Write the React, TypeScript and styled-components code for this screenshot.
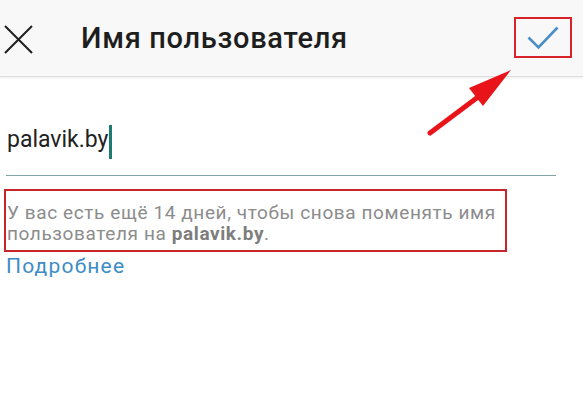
import React from "react";
import styled, { createGlobalStyle } from "styled-components";

const Global = createGlobalStyle`
  html, body { margin: 0; padding: 0; background: #ffffff; }
  body { font-family: Roboto, "Noto Sans", Arial, sans-serif; width: 583px; height: 400px; overflow: hidden; }
`;

const Page = styled.div`
  position: relative;
  width: 583px;
  height: 400px;
  background: #ffffff;
`;

const Header = styled.header`
  height: 77px;
  box-sizing: border-box;
  display: flex;
  align-items: center;
  padding: 0 11px 0 4px;
  background: #f8f8f8;
  border-bottom: 1px solid #dedede;
  box-shadow: 0 1px 2px rgba(0, 0, 0, 0.08);
`;

const IconButton = styled.button`
  width: 29px;
  height: 29px;
  padding: 0;
  margin: 2px 0 0 0;
  border: none;
  background: none;
  display: flex;
  align-items: center;
  justify-content: center;
`;

const Title = styled.h1`
  margin: 0 0 0 48px;
  flex: 1;
  font-size: 29px;
  font-weight: 500;
  color: #1e1e1e;
  letter-spacing: 0.7px;
`;

const ConfirmButton = styled.button`
  width: 58px;
  height: 41px;
  box-sizing: border-box;
  margin-top: -1px;
  padding: 0;
  border: 2px solid #d9232b;
  background: none;
  display: flex;
  align-items: center;
  justify-content: center;
`;

const Content = styled.main`
  padding: 0 27px 0 4px;
`;

const Field = styled.div`
  height: 99px;
  box-sizing: border-box;
  display: flex;
  align-items: flex-start;
  padding: 46px 0 0 1px;
  border-bottom: 1.5px solid #7fa3a6;
  margin-left: 2px;
`;

const Value = styled.span`
  font-size: 23px;
  line-height: 34px;
  color: #222222;
`;

const Caret = styled.span`
  display: block;
  width: 3px;
  height: 34px;
  margin: 2px 0 0 0;
  background: #1f7a72;
`;

const HintBox = styled.div`
  margin-top: 13px;
  width: 503px;
  box-sizing: border-box;
  border: 2px solid #c8252b;
  padding: 11px 0 6px 1px;
  font-size: 19px;
  line-height: 21px;
  letter-spacing: 0.6px;
  color: #8c8c8c;
`;

const Strong = styled.b`
  font-weight: 700;
  color: #7d7d7d;
`;

const MoreLink = styled.a`
  display: block;
  margin: 2px 0 0 2px;
  font-size: 21px;
  letter-spacing: 1.2px;
  color: #3e8cc6;
  text-decoration: none;
`;

const Arrow = styled.svg`
  position: absolute;
  left: 420px;
  top: 60px;
`;

export default function App() {
  return (
    <Page>
      <Global />
      <Header>
        <IconButton aria-label="close">
          <svg width="29" height="29" viewBox="0 0 29 29">
            <path d="M1 1 L28 28 M28 1 L1 28" stroke="#1f1f1f" strokeWidth="2" fill="none" />
          </svg>
        </IconButton>
        <Title>Имя пользователя</Title>
        <ConfirmButton aria-label="done">
          <svg width="32" height="25" viewBox="0 0 32 25">
            <path d="M1.5 12.5 L11.5 22.5 L30.5 2.5" stroke="#4a8ec6" strokeWidth="2.6" fill="none" />
          </svg>
        </ConfirmButton>
      </Header>
      <Content>
        <Field>
          <Value>palavik.by</Value>
          <Caret />
        </Field>
        <HintBox>
          У вас есть ещё 14 дней, чтобы снова поменять имя пользователя на <Strong>palavik.by</Strong>.
        </HintBox>
        <MoreLink href="#">Подробнее</MoreLink>
      </Content>
      <Arrow width="100" height="80" viewBox="0 0 100 80">
        <line x1="10" y1="73" x2="58" y2="37" stroke="#e8141a" strokeWidth="5" strokeLinecap="round" />
        <polygon points="91,10 49,28 63,46" fill="#e8141a" />
      </Arrow>
    </Page>
  );
}
